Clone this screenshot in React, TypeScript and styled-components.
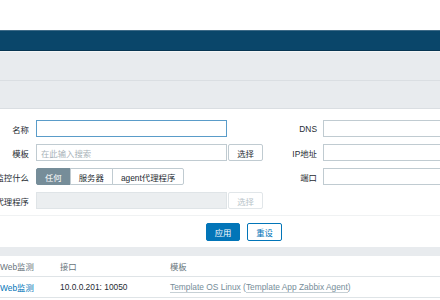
import React from "react";
import styled, { createGlobalStyle } from "styled-components";

const Global = createGlobalStyle`
  html, body { margin: 0; padding: 0; background: #ffffff; overflow: hidden; }
  body {
    width: 440px; height: 300px;
    font-family: "Liberation Sans", "Noto Sans CJK SC", sans-serif;
    font-size: 8.4px; color: #1f2c33;
  }
  * { box-sizing: border-box; }
`;

const Page = styled.div`
  width: 440px;
  height: 300px;
  overflow: hidden;
  display: flex;
  flex-direction: column;
`;

const TopSpace = styled.div`
  height: 30px;
  flex: none;
`;

const HeaderBar = styled.div`
  height: 21px;
  flex: none;
  background: #0a466a;
  border-top: 1px solid #3f6b88;
  border-bottom: 1px solid #063552;
`;

const SubBar = styled.div<{ $h: number; $top?: boolean }>`
  height: ${(p) => p.$h}px;
  flex: none;
  background: #e8ebee;
  border-top: ${(p) => (p.$top ? "1px solid #f3f5f6" : "none")};
  border-bottom: 1px solid #dadee2;
`;

const Form = styled.div`
  display: flex;
  padding-top: 11px;
  height: 107px;
  flex: none;
  border-bottom: 1px solid #f0f2f3;
`;

const Column = styled.div<{ $w?: number }>`
  display: flex;
  flex-direction: column;
  gap: 7px;
  width: ${(p) => (p.$w ? `${p.$w}px` : "auto")};
  flex: ${(p) => (p.$w ? "none" : "1")};
`;

const Row = styled.div`
  display: flex;
  align-items: center;
  height: 17px;
`;

const Label = styled.div<{ $w: number }>`
  width: ${(p) => p.$w}px;
  flex: none;
  display: flex;
  justify-content: flex-end;
  white-space: nowrap;
  margin-right: ${(p) => (p.$w > 40 ? 6 : 7)}px;
  color: #1f2c33;
`;

const Input = styled.div<{ $w: number; $focus?: boolean; $disabled?: boolean }>`
  width: ${(p) => p.$w}px;
  flex: none;
  height: 17px;
  border: 1px solid ${(p) => (p.$focus ? "#5a9cc9" : p.$disabled ? "#dfe4e7" : "#c0cbd1")};
  background: ${(p) => (p.$disabled ? "#ebeef0" : "#ffffff")};
  display: flex;
  align-items: center;
  padding-left: 4px;
  color: #a8b2b8;
`;

const SmallButton = styled.div<{ $disabled?: boolean }>`
  width: 35px;
  flex: none;
  margin-left: 1px;
  height: 17px;
  border: 1px solid ${(p) => (p.$disabled ? "#e1e6e9" : "#c0cbd1")};
  border-radius: 2px;
  background: #ffffff;
  color: ${(p) => (p.$disabled ? "#b7c3c9" : "#1f2c33")};
  display: flex;
  align-items: center;
  justify-content: center;
`;

const Segmented = styled.div`
  display: flex;
  height: 17px;
`;

const Segment = styled.div<{ $active?: boolean }>`
  height: 17px;
  padding: 0 8px;
  display: flex;
  align-items: center;
  border: 1px solid ${(p) => (p.$active ? "#768d99" : "#c0cbd1")};
  margin-left: -1px;
  background: ${(p) => (p.$active ? "#768d99" : "#ffffff")};
  color: ${(p) => (p.$active ? "#ffffff" : "#1f2c33")};
  white-space: nowrap;
  &:first-child { margin-left: 0; border-radius: 2px 0 0 2px; }
  &:last-child { border-radius: 0 2px 2px 0; }
`;

const Actions = styled.div`
  display: flex;
  gap: 7px;
  padding-left: 206px;
  padding-top: 7px;
  height: 31px;
  flex: none;
`;

const ActionButton = styled.div<{ $primary?: boolean }>`
  width: ${(p) => (p.$primary ? 34 : 35)}px;
  height: 18px;
  border: 1px solid #0275b8;
  border-radius: 2px;
  background: ${(p) => (p.$primary ? "#0275b8" : "#ffffff")};
  color: ${(p) => (p.$primary ? "#ffffff" : "#0275b8")};
  display: flex;
  align-items: center;
  justify-content: center;
`;

const Band = styled.div`
  height: 9px;
  flex: none;
  background: #e8ebee;
`;

const TableRow = styled.div<{ $head?: boolean }>`
  display: grid;
  grid-template-columns: 60px 110px 1fr;
  align-items: center;
  height: ${(p) => (p.$head ? 21 : 21)}px;
  flex: none;
  border-bottom: 1px solid #dfe4e7;
  color: ${(p) => (p.$head ? "#68747b" : "#1f2c33")};
  white-space: nowrap;
`;

const Link = styled.span`
  color: #0275b8;
`;

const Muted = styled.span`
  color: #768d99;
`;

const Underlined = styled.span`
  color: #768d99;
  border-bottom: 1px solid #c6d0d5;
`;

export default function App() {
  return (
    <Page>
      <Global />
      <TopSpace />
      <HeaderBar />
      <SubBar $h={30} $top />
      <SubBar $h={28} />
      <Form>
        <Column $w={262}>
          <Row>
            <Label $w={29}>名称</Label>
            <Input $w={191} $focus />
          </Row>
          <Row>
            <Label $w={29}>模板</Label>
            <Input $w={191}>在此输入搜索</Input>
            <SmallButton>选择</SmallButton>
          </Row>
          <Row>
            <Label $w={29}>监控什么</Label>
            <Segmented>
              <Segment $active>任何</Segment>
              <Segment>服务器</Segment>
              <Segment>agent代理程序</Segment>
            </Segmented>
          </Row>
          <Row>
            <Label $w={29}>代理程序</Label>
            <Input $w={191} $disabled />
            <SmallButton $disabled>选择</SmallButton>
          </Row>
        </Column>
        <Column>
          <Row>
            <Label $w={55}>DNS</Label>
            <Input $w={191} />
          </Row>
          <Row>
            <Label $w={55}>IP地址</Label>
            <Input $w={191} />
          </Row>
          <Row>
            <Label $w={55}>端口</Label>
            <Input $w={191} />
          </Row>
        </Column>
      </Form>
      <Actions>
        <ActionButton $primary>应用</ActionButton>
        <ActionButton>重设</ActionButton>
      </Actions>
      <Band />
      <TableRow $head>
        <span>Web监测</span>
        <span>接口</span>
        <span>模板</span>
      </TableRow>
      <TableRow>
        <Link>Web监测</Link>
        <span>10.0.0.201: 10050</span>
        <span>
          <Underlined>Template OS Linux</Underlined> <Muted>(</Muted>
          <Underlined>Template App Zabbix Agent</Underlined>
          <Muted>)</Muted>
        </span>
      </TableRow>
    </Page>
  );
}
